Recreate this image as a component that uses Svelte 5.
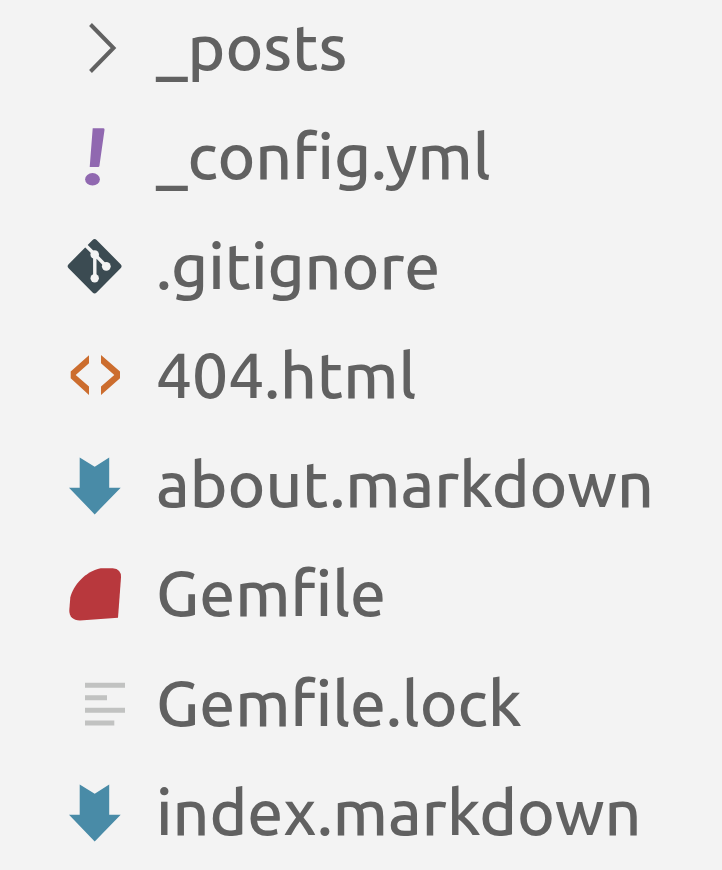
<script>
  const files = [
    { name: '_posts', icon: 'folder' },
    { name: '_config.yml', icon: 'yaml' },
    { name: '.gitignore', icon: 'git' },
    { name: '404.html', icon: 'html' },
    { name: 'about.markdown', icon: 'markdown' },
    { name: 'Gemfile', icon: 'ruby' },
    { name: 'Gemfile.lock', icon: 'text' },
    { name: 'index.markdown', icon: 'markdown' }
  ];
</script>

<ul class="files">
  {#each files as file}
    <li class="file">
      <svg class="icon" viewBox="0 0 64 64" aria-hidden="true">
        {#if file.icon === 'folder'}
          <path d="M26.5 8.5 49.5 32 26.5 55.5" fill="none" stroke="#616161" stroke-width="4" />
        {:else if file.icon === 'yaml'}
          <path d="M28.7 3.2H39.5Q40.8 3.3 40.5 5L35.4 41Q35.2 42 34.2 42H25.7Z" fill="#9068b0" />
          <ellipse cx="28.5" cy="54.3" rx="7.4" ry="6.2" fill="#9068b0" />
        {:else if file.icon === 'git'}
          <path d="M28.6 6Q30.6 4 32.6 6L56.6 30.2Q58.6 32.2 56.6 34.2L32.6 58.5Q30.6 60.5 28.6 58.5L4.6 34.2Q2.6 32.2 4.6 30.2Z" fill="#3b4b52" />
          <g stroke="#f3f3f3" stroke-width="3.4" fill="none">
            <path d="M21 10.7 30.6 20.3 42.3 32.3M30.8 20.3V44.2" />
          </g>
          <g fill="#f3f3f3">
            <circle cx="30.7" cy="20.5" r="4.3" />
            <circle cx="42.3" cy="32.3" r="4.4" />
            <circle cx="30.7" cy="44.2" r="4.2" />
          </g>
        {:else if file.icon === 'html'}
          <path d="M25 12.3V20.3L11.7 32 25 43.6V52L6.7 35.3V28.6ZM37 12 56 28.6V35.3L37 52V43.6L50.3 32 37 20.3Z" fill="#cc6d2e" />
        {:else if file.icon === 'markdown'}
          <path d="M15.7 4.4 30.7 13.7 45.2 4.4V34.7H56.7L30.7 61.4 5 34.7H15.7Z" fill="#498ba7" />
        {:else if file.icon === 'ruby'}
          <path d="M36.7 6.3H48.7Q57.4 7 57 15.4L54 55.8 16 58.4C9 58.4 5 54.5 5.3 48L6.3 35.4C9.5 23.5 20.5 9.8 36.7 6.3Z" fill="#b8383d" />
        {:else}
          <path d="M21 11.8H61V16.8H21ZM21 24.3H43V29.3H21ZM21 36.8H61V41.8H21ZM21 49.6H50.3V54.6H21Z" fill="#c1c2c1" />
        {/if}
      </svg>
      <span class="name">{file.name}</span>
    </li>
  {/each}
</ul>

<style>
  :global(body) {
    margin: 0;
    background: #f3f3f3;
  }

  .files {
    box-sizing: border-box;
    display: flex;
    flex-direction: column;
    justify-content: space-between;
    min-height: 100vh;
    margin: 0;
    padding: 0 0 10px 64px;
    list-style: none;
    color: #616161;
    font-family: Ubuntu, "Noto Sans", sans-serif;
    font-size: 64px;
    font-weight: 500;
    line-height: 93px;
  }

  .file {
    display: flex;
    align-items: center;
    gap: 28px;
  }

  .icon {
    flex: none;
    width: 64px;
    height: 64px;
  }

  .name {
    padding-bottom: 2px;
    white-space: nowrap;
  }
</style>
